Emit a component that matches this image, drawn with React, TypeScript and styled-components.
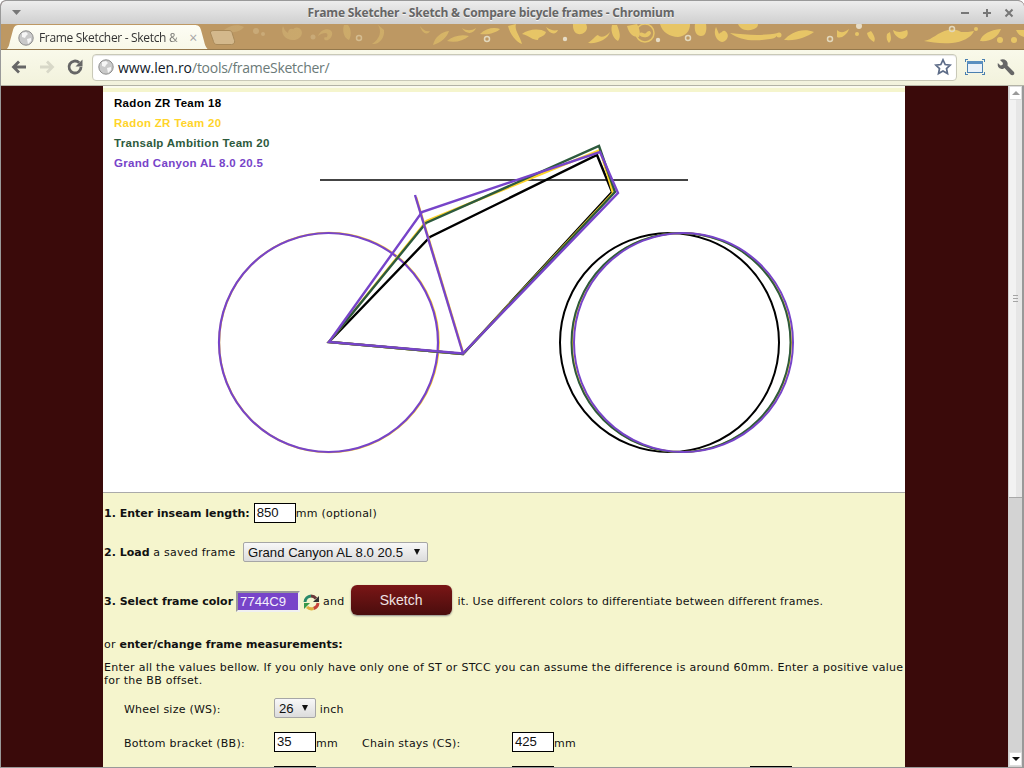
import React from 'react';
import styled, { createGlobalStyle } from 'styled-components';

const Global = createGlobalStyle`
  html, body { margin: 0; padding: 0; height: 768px; overflow: hidden; background: #fff; }
  #root { height: 768px; }
`;
const Win = styled.div`
  width: 1024px; height: 768px; display: flex; flex-direction: column; overflow: hidden; box-sizing: border-box;
  font-family: "DejaVu Sans", sans-serif; background: #3a0a0a; border: 1px solid #999; border-right: 0; border-radius: 6px 6px 0 0;
`;
const TitleBar = styled.div`
  height: 23px; flex: none; display: flex; align-items: center; justify-content: space-between; padding: 0 9px 0 10px;
  background: linear-gradient(#ededed, #cfcfcf); box-sizing: border-box;
`;
const Title = styled.div`
  font: bold 12px "Open Sans", "DejaVu Sans", sans-serif; color: #666; text-shadow: 0 1px 0 #f4f4f4; letter-spacing: -.18px;
`;
const WinBtns = styled.div`display: flex; gap: 10px; align-items: center;`;
const TabStrip = styled.div`
  height: 26px; flex: none; background: #bd9863; display: flex; align-items: flex-end; position: relative; overflow: hidden;
  border-bottom: 1px solid #94784c; box-sizing: border-box; padding-left: 3px;
`;
const Pattern = styled.svg`position: absolute; left: -1px; top: 0;`;
const Tab = styled.div`
  position: relative; width: 206px; height: 25px; display: flex; align-items: center; gap: 5px; padding: 0 13px 0 14px; box-sizing: border-box;
  background: linear-gradient(#fdfdf4, #f8f8e8); margin-bottom: -1px; flex: none;
  clip-path: path("M0 25C4 25 5 21 6 16L9 5C10 1 12 0 15 0H190C194 0 196 1 197 5L200 16C201 21 203 25 206 25Z");
  font: 12px "Open Sans", sans-serif; color: #333; letter-spacing: -.32px;
`;
const TabLabel = styled.span`
  flex: 1; white-space: nowrap;
  -webkit-mask-image: linear-gradient(to right, #000 85%, rgba(0,0,0,.25));
  mask-image: linear-gradient(to right, #000 85%, rgba(0,0,0,.25));
`;
const Close = styled.span`color: #a5a5a5; font-size: 14px; line-height: 1;`;
const NewTab = styled.svg`position: relative; flex: none; margin: 0 0 3px -1px;`;
const Toolbar = styled.div`
  height: 36px; flex: none; display: flex; align-items: center; padding: 0 0 1px 9px; box-sizing: border-box;
  background: linear-gradient(#f9f9ea, #f2f2dc); border-bottom: 1px solid #b3b3a6;
`;
const NavBtn = styled.div`width: 28px; height: 24px; display: flex; align-items: center; justify-content: flex-start;`;
const Omni = styled.div`
  width: 865px; height: 27px; margin-left: -2px; box-sizing: border-box; display: flex; align-items: center; padding: 0 4px 0 5px; flex: none;
  background: #fff; border: 1px solid #c9c9b8; border-radius: 4px; box-shadow: inset 0 1px 1px #e6e6e6;
  font: 14px "Open Sans", sans-serif;
`;
const Host = styled.span`color: #101828; margin-left: 4px;`;
const Path = styled.span`color: #6b7a78; flex: 1; letter-spacing: -.28px;`;
const Main = styled.div`flex: 1; display: flex; min-height: 0;`;
const Page = styled.div`flex: 1; display: flex; justify-content: center; background: #3a0a0a; min-width: 0; padding-right: 1px;`;
const Column = styled.div`width: 802px; background: #f5f5cd; font-size: 11px; color: #111; overflow: hidden; letter-spacing: .24px;`;
const TopStrip = styled.div`height: 4px; background: #f5f5cd; border-top: 2px solid #fbfbee;`;
const Canvas = styled.div`
  position: relative; height: 400px; background: #fff; border-bottom: 1px solid #aaa;
`;
const Legend = styled.div`
  position: absolute; left: 11px; top: 1px; display: flex; flex-direction: column; font: bold 11.5px/20px "Liberation Sans", sans-serif; letter-spacing: .3px;
`;
const LegendRow = styled.div<{ $c: string }>`color: ${p => p.$c};`;
const Form = styled.div`padding: 0 1px; line-height: 13px;`;
const Row = styled.div<{ $h: number; $pl?: number }>`
  display: flex; align-items: center; height: ${p => p.$h}px; white-space: pre; padding-left: ${p => p.$pl ?? 0}px;
`;
const B = styled.b`letter-spacing: 0;`;
const TextInput = styled.div<{ $ml?: number }>`
  width: 42px; height: 20px; box-sizing: border-box; border: 1px solid #000; background: #fff; font: 13.15px "Liberation Sans", sans-serif; letter-spacing: 0; padding-left: 2px; line-height: 18px; color: #111; flex: none; margin-left: ${p => p.$ml ?? 0}px;
`;
const Select = styled.div<{ $w: number }>`
  width: ${p => p.$w}px; height: 20px; box-sizing: border-box; border: 1px solid #a6a6a6; border-radius: 2px; flex: none; letter-spacing: 0;
  background: linear-gradient(#f8f8f8, #dcdcdc); font: 13.15px "Liberation Sans", sans-serif; color: #111;
  display: flex; align-items: center; justify-content: space-between; padding: 0 7px 0 4px;
`;
const Arrow = styled.span`width: 0; height: 0; border-left: 3.5px solid transparent; border-right: 3.5px solid transparent; border-top: 6px solid #111;`;
const ColorBox = styled.div`
  width: 64px; height: 21px; box-sizing: border-box; background: #7744c9; color: #f4effc; border: 2px solid; border-color: #999 #f0f0f0 #f0f0f0 #999; flex: none; letter-spacing: 0; margin-left: 3px;
  font: 13.15px "Liberation Sans", sans-serif; padding-left: 2px; line-height: 17px;
`;
const SketchBtn = styled.div`
  width: 101px; height: 30px; border-radius: 6px; background: linear-gradient(#7a1616, #4a0d0d); color: #efe3e3; font: 14px "Liberation Sans", sans-serif; letter-spacing: 0;
  display: flex; align-items: center; justify-content: center; box-shadow: 0 1px 2px #888; margin: 0 6px 2px 6px; flex: none;
`;
const Note = styled.span`letter-spacing: .17px;`;
const Label = styled.span`display: inline-block; width: 150px; flex: none; padding-top: 2px; box-sizing: border-box;`;
const Unit = styled.span`padding-top: 2px;`;
const Cell = styled.div`width: 238px; display: flex; align-items: center; flex: none;`;
const Para = styled.div`margin: 4px 0 4px; line-height: 13px; width: 800px; letter-spacing: .27px;`;
const Scrollbar = styled.div`
  width: 16px; flex: none; background: #d3d3d3; box-sizing: border-box; display: flex; flex-direction: column; padding-bottom: 1px;
  border-left: 1px solid #d0d0d0; border-right: 2px solid #999;
`;
const ScrollBtn = styled.div<{ $up?: boolean }>`
  height: 14px; flex: none; background: #fff; display: flex; align-items: center; justify-content: center; border: 1px solid #ddd; box-sizing: border-box;
  &::after { content: ""; width: 0; height: 0; border-left: 4px solid transparent; border-right: 4px solid transparent;
  ${p => p.$up ? 'border-bottom: 4px solid #9a9a9a;' : 'border-top: 4px solid #111;'} }
`;
const Thumb = styled.div`
  height: 398px; flex: none; background: linear-gradient(to right, #f2f2f2, #f2f2f2 54%, #e6e6e6 54%); border-bottom: 1px solid #a8a8a8; box-sizing: border-box; display: flex; flex-direction: column; align-items: center; justify-content: center; gap: 2px;
`;
const Grip = styled.span`width: 5px; height: 1px; background: #a5a5a5;`;
const Track = styled.div`flex: 1;`;

const Globe = () => (
  <svg width="16" height="16" viewBox="0 0 16 16"><circle cx="8" cy="8" r="7.2" fill="#c9c9c9" stroke="#8c8c8c" /><path d="M4 3l4-1 2 2-2 2-1 2-3-1zM9 9l4-1 0 3-3 3z" fill="#f6f6f6" /></svg>
);
const Wheel = ({ cx, c, w = 2, r = 109.5 }: { cx: number; c: string; w?: number; r?: number }) => <circle cx={cx} cy={250.5} r={r} fill="none" stroke={c} strokeWidth={w} />;

const blobs = [
  'M224 6c6-5 14-6 20-3-4 5-12 7-20 3z',
  'M283 2c-3 7 2 14 10 14 8 0 12-8 6-12-4-2-8 2-5 5 1-6-6-5-6 0-3-2-4-4-5-7z',
  'M318 12c2-5 8-8 12-6 4 2 2 8-2 10-3 1-5-1-3-3 2 2 4-3 1-4-3 0-6 1-8 3z',
  'M344 1c-2 6 0 13 5 15 3-5 2-11-1-15zM378 1c4 6 2 14-6 19 7 1 13-6 12-14z',
  'M420 2c3 4 6 6 10 5-3 5-8 2-10-5zM433 21c2-8 8-13 16-14-2 6-8 12-16 14zM447 17c6-5 14-7 22-5-6 5-14 7-22 5zM462 4c4 3 10 3 14 0-2 6-10 7-14 0z',
  'M480 10c6-6 14-7 20-5-4 4-12 6-20 5zM508 2c2 8 8 16 14 18-2-8-8-14-6-20zM522 10c6-5 18-6 24-2-2 6-8 4-8 8-6 0-8-4-16-6zM546 3c4 3 8 4 12 3-2 5-8 5-12-3z',
  'M573 2c0 7 6 11 12 6 3-3 2-6 1-8h-13zM588 19c6-4 8-8 10-8 2 3 8 2 12-3-2 7-12 12-22 11zM612 1c-2 7 2 14 6 16 3-4 2-8-1-16zM627 2c2 8 6 11 12 11 2-4 0-9-2-13z',
  'M660 0c2 8 10 13 18 13 8-1 12-6 12-13z',
  'M695 0c-1 7 1 12 6 12 5 0 6-6 5-12zM716 3c-3 6 0 14 6 15 6-1 8-8 3-11-3-1-4 2-2 4 3 2 0-6-4-1zM730 9c10 7 22 9 40 6 4 0 8-3 8-6-14 3-32 2-48 0zM738 0c2 5 8 8 16 5 3-1 4-3 4-5z',
  'M784 16c6-7 18-13 30-8-8 5-16 9-30 8zM837 6c4 4 8 2 12-1-2 6-8 10-12 8 0-3 0-5 0-7z',
  'M867 9c1 5 4 7 7 9 2-3 0-7-3-11zM887 10c-1 4 0 7 2 9 3-3 2-6 1-11zM893 6c5 3 9 2 14 0 2 4 0 8-5 9-4-1-8-4-9-9z',
  'M924 17c8-1 14-9 24-11 8-2 12 2 14 2 4 0 8 0 12-1-3 7-12 11-22 12-12 1-20-1-28-2z',
  'M980 17c2-7 10-11 21-12-3 8-10 13-21 12zM1016 6c2 4 4 6 8 7v-7z',
];
const dotsStrong: [number, number, number][] = [[779, 11, 2.5], [976, 5, 2], [1000, 16, 3], [1014, 16, 3], [857, 10, 2]];

export default function App() {
  return (
    <Win>
      <Global />
      <TitleBar>
        <svg width="12" height="8" viewBox="0 0 12 8"><path d="M1 1h9L5.500 6z" fill="#777" /></svg>
        <Title>Frame Sketcher - Sketch &amp; Compare bicycle frames - Chromium</Title>
        <WinBtns>
          <svg width="12" height="12" viewBox="0 0 12 12"><path d="M2 6h8" stroke="#777" strokeWidth="2" /></svg>
          <svg width="12" height="12" viewBox="0 0 12 12"><path d="M2 6h8M6 2v8" stroke="#777" strokeWidth="2" /></svg>
          <svg width="12" height="12" viewBox="0 0 12 12"><path d="M2.500 2.500l7 7M9.500 2.500l-7 7" stroke="#777" strokeWidth="2" /></svg>
        </WinBtns>
      </TitleBar>
      <TabStrip>
        <Pattern width="1024" height="26" viewBox="0 0 1024 26">
          <defs>
            <linearGradient id="fade" gradientUnits="userSpaceOnUse" x1="230" y1="0" x2="520" y2="0">
              <stop offset="0" stopColor="#c6a56f" />
              <stop offset="0.65" stopColor="#d0ae67" />
              <stop offset="1" stopColor="#e7c566" />
            </linearGradient>
          </defs>
          <g fill="url(#fade)">
            {blobs.map((d, i) => <path key={i} d={d} />)}
            {dotsStrong.map(([x, y, r], i) => <circle key={i} cx={x} cy={y} r={r} />)}
            <circle cx="645" cy="9" r="9" fill="none" stroke="#e7c566" strokeWidth="1.500" />
            <path d="M639 10c3-4 5 1 7-1s4-3 5 0c-1 5-10 6-12 1z" />
          </g>
          <g fill="#c9aa78">
            <circle cx="256" cy="7" r="3" /><circle cx="263" cy="10" r="2" /><circle cx="313" cy="13" r="2.500" />
          </g>
          <g fill="#e6dcc6">
            <circle cx="859" cy="2" r="3" /><circle cx="565" cy="15" r="2.200" /><circle cx="658" cy="16" r="2.200" />
          </g>
          <g fill="none" stroke="#e2d8bc" strokeWidth="1.500">
            <circle cx="359" cy="14" r="2.500" stroke="#d4bc90" />
            <circle cx="487" cy="15" r="2.500" />
            <circle cx="688" cy="14" r="2.500" />
            <circle cx="830" cy="15" r="2.500" />
            <circle cx="952" cy="5" r="2.500" />
          </g>
        </Pattern>
        <Tab>
          <Globe />
          <TabLabel>Frame Sketcher - Sketch &amp;</TabLabel>
          <Close>×</Close>
        </Tab>
        <NewTab width="27" height="17" viewBox="0 0 27 17"><path d="M5 1.500h15c2 0 2.500 1 3 2l2.500 8c.5 2-.5 4-3 4H8c-2 0-3-1-3.500-3L1.500 4c-.5-1.500 1-2.500 3.500-2.500z" fill="#d3b88c" stroke="#a98a5a" /></NewTab>
      </TabStrip>
      <Toolbar>
        <NavBtn><svg width="18" height="18" viewBox="0 0 18 18"><path d="M16 9H4M9 3.500L3.500 9 9 14.500" fill="none" stroke="#666" strokeWidth="2.800" /></svg></NavBtn>
        <NavBtn><svg width="18" height="18" viewBox="0 0 18 18"><path d="M2 9h12M9 3.500L14.500 9 9 14.500" fill="none" stroke="#d8d8c8" strokeWidth="2.800" /></svg></NavBtn>
        <NavBtn><svg width="18" height="18" viewBox="0 0 18 18"><path d="M15 9a6 6 0 1 1-1.800-4.300" fill="none" stroke="#666" strokeWidth="2.800" /><path d="M16.500 1.500v7h-7z" fill="#666" /></svg></NavBtn>
        <Omni>
          <Globe />
          <Host>www.len.ro</Host><Path>/tools/frameSketcher/</Path>
          <svg width="18" height="18" viewBox="0 0 18 18"><path d="M9 1.800l2.200 4.700 5 .6-3.700 3.400 1 5L9 13l-4.500 2.500 1-5L1.800 7.100l5-.6z" fill="#fff" stroke="#5d6c88" strokeWidth="1.700" /></svg>
        </Omni>
        <svg style={{ marginLeft: 8 }} width="20" height="20" viewBox="0 0 20 20"><rect x="2.500" y="4.500" width="15" height="11" fill="#eaf1f8" stroke="#4a7fb0" /><rect x="2" y="4" width="16" height="3" fill="#5a8fc0" /><path d="M0 2.500h3M17 2.500h3M0 17.500h3M17 17.500h3M.5 2v3M19.500 2v3M.5 15v3M19.500 15v3" stroke="#4a7fb0" /></svg>
        <svg style={{ marginLeft: 12 }} width="18" height="18" viewBox="0 0 18 18"><path d="M3 2L6 5L5.500 7L3.500 7.500L.8 5C.2 8 1.500 10.500 4.500 11C6 11 7 10.500 7.500 10L13.500 16.500C14.500 17.500 16 17.500 17 16.500C17.500 15.500 17.500 14.500 16.500 13.500L10.500 7.500C11 5.500 10.500 3.500 9 2.500C7.500 1.200 5 1 3 2Z" fill="#666" /></svg>
      </Toolbar>
      <Main>
        <Page>
          <Column>
            <TopStrip />
            <Canvas>
              <Legend>
                <LegendRow $c="#000">Radon ZR Team 18</LegendRow>
                <LegendRow $c="#ffd42a">Radon ZR Team 20</LegendRow>
                <LegendRow $c="#2d5a3d">Transalp Ambition Team 20</LegendRow>
                <LegendRow $c="#7744c9">Grand Canyon AL 8.0 20.5</LegendRow>
              </Legend>
              <svg width="802" height="400" viewBox="0 0 802 400">
                <path d="M217 88H585" stroke="#444" strokeWidth="2" />
                <Wheel cx={226} c="#ffd42a" r={109.8} />
                <Wheel cx={566.5} c="#000" />
                <Wheel cx={578.5} c="#ffd42a" />
                <Wheel cx={578} c="#2d5a3d" />
                <Wheel cx={225.5} c="#7744c9" w={2.2} />
                <Wheel cx={580.5} c="#7744c9" />
                <g fill="none" strokeWidth="2.400">
                  <path d="M226 250L327 145L494 63L509 100L360 262Z" stroke="#000" />
                  <path d="M226 250L323.500 129L497 58L510 101L360 262Z" stroke="#ffd42a" />
                  <path d="M226 250L323 131L496 54L512 100L360 262Z" stroke="#2d5a3d" />
                  <path d="M313 105L360.500 262" stroke="#ffd42a" />
                  <path d="M226 250L319 120L497 60L515 101L360 261.500Z" stroke="#7744c9" />
                  <path d="M312 103L360 261.500" stroke="#7744c9" />
                </g>
              </svg>
            </Canvas>
            <Form>
              <Row $h={40}><B>1. Enter inseam length:</B><TextInput $ml={4}>850</TextInput>mm (optional)</Row>
              <Row $h={38}><B>2. Load</B> a saved frame  <Select $w={185}>Grand Canyon AL 8.0 20.5<Arrow /></Select></Row>
              <Row $h={60}><B>3. Select frame color</B><ColorBox>7744C9</ColorBox>
                <svg style={{ margin: '2px 3px 0 3px' }} width="17" height="17" viewBox="0 0 17 17" fill="none" strokeWidth="3"><path d="M2 8a6.500 6.500 0 0 1 6-6" stroke="#2a8a6a" /><path d="M8 2a6.500 6.500 0 0 1 5 2.500" stroke="#6a3a3a" /><path d="M15 9a6.500 6.500 0 0 1-4.500 5.500" stroke="#c8443a" /><path d="M10.500 14.500A6.500 6.500 0 0 1 4 13" stroke="#e0b040" /><path d="M16 2v6h-6z" fill="#333" /><path d="M1 15V9h6z" fill="#3a9a4a" /></svg>
                and<SketchBtn>Sketch</SketchBtn><Note>it. Use different colors to differentiate between different frames.</Note></Row>
              <Row $h={26}>or <B>enter/change frame measurements:</B></Row>
              <Para>Enter all the values bellow. If you only have only one of ST or STCC you can assume the difference is around 60mm. Enter a positive value for the BB offset.</Para>
              <Row $h={34} $pl={20}><Label>Wheel size (WS):</Label><Select $w={42}>26<Arrow /></Select><Unit> inch</Unit></Row>
              <Row $h={34} $pl={20}>
                <Cell><Label>Bottom bracket (BB):</Label><TextInput>35</TextInput><Unit>mm</Unit></Cell>
                <Cell><Label>Chain stays (CS):</Label><TextInput>425</TextInput><Unit>mm</Unit></Cell>
              </Row>
              <Row $h={34} $pl={20}>
                <Cell><Label /><TextInput /></Cell>
                <Cell><Label /><TextInput /></Cell>
                <Cell><Label /><TextInput /></Cell>
              </Row>
            </Form>
          </Column>
        </Page>
        <Scrollbar>
          <ScrollBtn $up />
          <Thumb><Grip /><Grip /><Grip /></Thumb>
          <Track />
          <ScrollBtn />
        </Scrollbar>
      </Main>
    </Win>
  );
}
